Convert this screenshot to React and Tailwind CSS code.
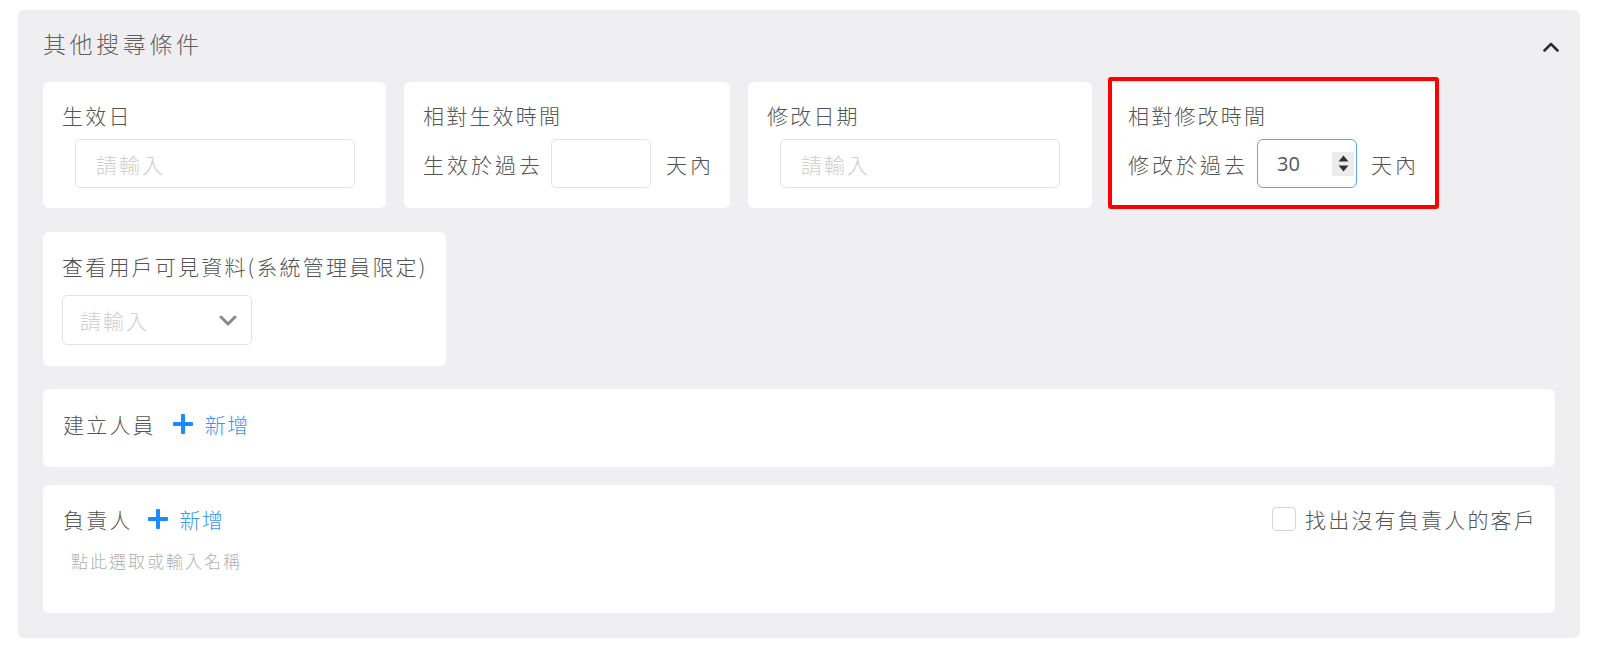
import React from "react";

const FONT = { fontFamily: '"Noto Sans CJK TC", "Noto Sans", sans-serif' };

function Plus() {
  return (
    <svg width="20" height="20" viewBox="0 0 20 20" className="block">
      <rect x="8" y="0" width="4" height="20" rx="1" fill="#1a8cff" />
      <rect x="0" y="8" width="20" height="4" rx="1" fill="#1a8cff" />
    </svg>
  );
}

function TextInput({ className = "" }) {
  return (
    <div className={`h-[49px] w-[280px] rounded-[5px] border border-[#e3e3e3] bg-white flex items-center pl-[20px] ${className}`}>
      <span className="text-[21px] leading-[28px] tracking-[2px] font-light text-[#cfcfcf]">請輸入</span>
    </div>
  );
}

function Label({ children }) {
  return <div className="text-[21px] leading-[28px] tracking-[2.2px] font-light text-[#555] whitespace-nowrap">{children}</div>;
}

export default function App() {
  return (
    <div className="w-[1600px] h-[645px] bg-white pt-[10px] pl-[18px]" style={FONT}>
      <div className="w-[1562px] h-[628px] bg-[#efeff1] rounded-[6px] px-[25px]">
        <div className="h-[72px] flex items-start justify-between pt-[18px]">
          <div className="text-[23px] leading-[30px] tracking-[3.6px] font-light text-[#606060]">其他搜尋條件</div>
          <svg width="16" height="10" viewBox="0 0 16 10" className="mt-[14px] mr-[-4px]">
            <polyline points="1.5,8.5 8,2 14.5,8.5" fill="none" stroke="#2f2f2f" strokeWidth="2.6" strokeLinecap="round" strokeLinejoin="round" />
          </svg>
        </div>

        <div className="flex h-[126px]">
          <div className="w-[343px] bg-white rounded-[6px] pl-[19px] pt-[19px]">
            <Label>生效日</Label>
            <TextInput className="mt-[10px] ml-[13px]" />
          </div>
          <div className="w-[326px] ml-[18px] bg-white rounded-[6px] pl-[19px] pt-[19px]">
            <Label>相對生效時間</Label>
            <div className="mt-[10px] flex items-center">
              <span className="text-[21px] leading-[28px] tracking-[3px] font-light text-[#555]">生效於過去</span>
              <div className="ml-[8px] h-[49px] w-[100px] rounded-[5px] border border-[#e3e3e3] bg-white" />
              <span className="ml-[15px] text-[21px] leading-[28px] tracking-[3px] font-light text-[#555]">天內</span>
            </div>
          </div>
          <div className="w-[344px] ml-[18px] bg-white rounded-[6px] pl-[19px] pt-[19px]">
            <Label>修改日期</Label>
            <TextInput className="mt-[10px] ml-[13px]" />
          </div>
          <div className="relative w-[326px] ml-[17px] bg-white rounded-[6px] pl-[19px] pt-[19px]">
            <Label>相對修改時間</Label>
            <div className="mt-[10px] flex items-center">
              <span className="text-[21px] leading-[28px] tracking-[3px] font-light text-[#555]">修改於過去</span>
              <div className="ml-[9px] h-[49px] w-[100px] rounded-[6px] border border-[#5aa5f5] bg-white flex items-center justify-between pl-[19px] pr-[2px]">
                <span className="text-[20px] leading-[28px] text-[#555]" style={{ fontFamily: '"Open Sans", "Noto Sans", sans-serif' }}>30</span>
                <div className="w-[22px] h-[24px] bg-[#ececec] flex flex-col items-center justify-center gap-[3px]">
                  <svg width="11" height="7" viewBox="0 0 11 7"><polygon points="5.5,0.5 10.5,6.5 0.5,6.5" fill="#333" /></svg>
                  <svg width="11" height="7" viewBox="0 0 11 7"><polygon points="0.5,0.5 10.5,0.5 5.5,6.5" fill="#333" /></svg>
                </div>
              </div>
              <span className="ml-[14px] text-[21px] leading-[28px] tracking-[3px] font-light text-[#555]">天內</span>
            </div>
            <div className="absolute top-[-5px] left-[-1px] right-[-4px] bottom-[-1px] border-4 border-[#ff0000] rounded-[3px] pointer-events-none" />
          </div>
        </div>

        <div className="mt-[24px] w-[403px] bg-white rounded-[6px] pl-[19px] pt-[20px] pb-[21px]">
          <Label>查看用戶可見資料(系統管理員限定)</Label>
          <div className="mt-[15px] h-[50px] w-[190px] rounded-[5px] border border-[#e3e3e3] flex items-center justify-between pl-[17px] pr-[14px]">
            <span className="text-[21px] leading-[28px] tracking-[2px] font-light text-[#cfcfcf]">請輸入</span>
            <svg width="18" height="11" viewBox="0 0 18 11">
              <polyline points="2,2 9,9 16,2" fill="none" stroke="#8a8a8a" strokeWidth="3" strokeLinecap="round" strokeLinejoin="round" />
            </svg>
          </div>
        </div>

        <div className="mt-[23px] h-[78px] bg-white rounded-[6px] pl-[20px] pt-[21px] flex items-start">
          <div className="flex items-center h-[28px]">
            <Label>建立人員</Label>
            <div className="ml-[17px]"><Plus /></div>
            <span className="ml-[12px] text-[21px] leading-[28px] tracking-[1.5px] font-light text-[#3a95f0]">新增</span>
          </div>
        </div>

        <div className="mt-[18px] h-[128px] bg-white rounded-[6px] pl-[20px] pr-[18px] pt-[20px] flex justify-between items-start">
          <div>
            <div className="flex items-center h-[28px]">
              <Label>負責人</Label>
              <div className="ml-[15px]"><Plus /></div>
              <span className="ml-[12px] text-[21px] leading-[28px] tracking-[1.5px] font-light text-[#3a95f0]">新增</span>
            </div>
            <div className="mt-[16px] ml-[8px] text-[17px] leading-[24px] tracking-[2px] font-light text-[#b0b0b0]">點此選取或輸入名稱</div>
          </div>
          <div className="flex items-center h-[28px]">
            <div className="w-[24px] h-[24px] rounded-[4px] border border-[#d6d6d6] bg-white" />
            <span className="ml-[9px] text-[21px] leading-[28px] tracking-[2.2px] font-light text-[#555]">找出沒有負責人的客戶</span>
          </div>
        </div>
      </div>
    </div>
  );
}
